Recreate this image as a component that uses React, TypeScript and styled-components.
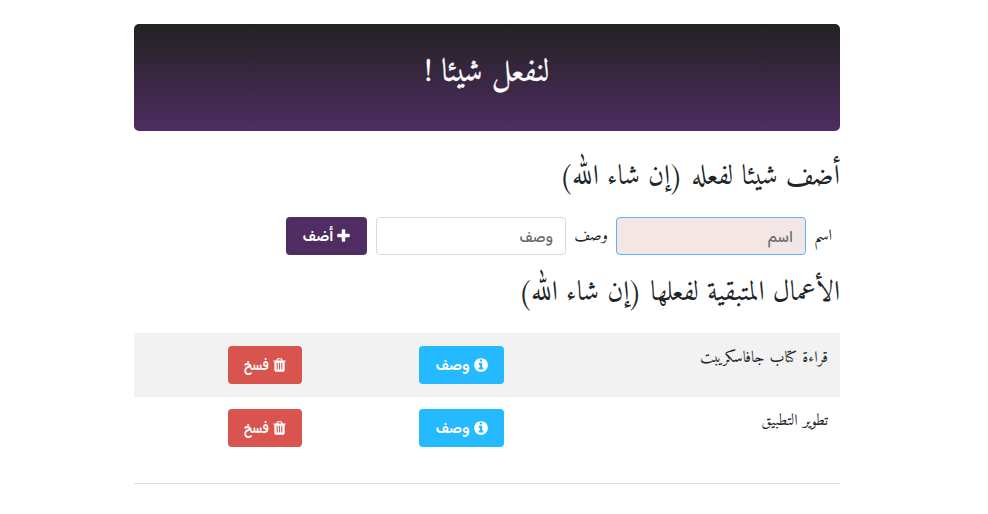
import React from "react";
import styled, { createGlobalStyle } from "styled-components";

const Global = createGlobalStyle`
  *, *::before, *::after { box-sizing: border-box; }
  body {
    margin: 0;
    background: #fff;
    color: #212529;
    font: 16px/24px Amiri, "Noto Naskh Arabic", "DejaVu Sans", serif;
  }
`;

const controlFont = `"Baloo Bhaijaan 2", "Noto Naskh Arabic", "DejaVu Sans", sans-serif`;

const Page = styled.main`
  width: 706px;
  margin-left: 134px;
  padding-top: 24px;
`;

const Banner = styled.header`
  height: 107px;
  padding-top: 28px;
  border-radius: 5px;
  background: linear-gradient(#222, #4f2c62);
  color: #fff;
  text-align: center;
`;

const BannerTitle = styled.h1`
  margin: 0;
  font-size: 32px;
  font-weight: 400;
  line-height: 42px;
  -webkit-text-stroke: 0.3px currentColor;
`;

const SectionTitle = styled.h2<{ $top: number; $bottom: number }>`
  margin: ${(p) => p.$top}px 0 ${(p) => p.$bottom}px;
  font-size: 28px;
  font-weight: 400;
  line-height: 34px;
`;

const Form = styled.form`
  display: flex;
  align-items: center;
  height: 38px;
  padding-right: 8px;
`;

const Label = styled.label<{ $width: number }>`
  width: ${(p) => p.$width}px;
  white-space: nowrap;
`;

const Input = styled.input<{ $active?: boolean }>`
  width: 190px;
  height: 38px;
  margin-left: ${(p) => (p.$active ? 8 : 9)}px;
  padding: 8px 12px 4px;
  border: 1px solid ${(p) => (p.$active ? "#5cb3fd" : "#d9d9d9")};
  border-radius: 4px;
  outline: 0;
  background: ${(p) => (p.$active ? "#f5e6e6" : "#fff")};
  font: 500 15.6px/24px ${controlFont};
  &::placeholder {
    color: #636c72;
    opacity: 1;
  }
`;

const Button = styled.button<{ $width: number; $color: string }>`
  display: flex;
  align-items: center;
  justify-content: center;
  gap: 4px;
  width: ${(p) => p.$width}px;
  height: 38px;
  padding: 4px 0 0;
  border: 0;
  border-radius: 4px;
  background: ${(p) => p.$color};
  color: #fff;
  font: 600 15.4px/24px ${controlFont};
  white-space: nowrap;
`;

const Narrow = styled.span`
  display: block;
  width: 24px;
  transform: scaleX(0.86);
  transform-origin: right;
`;

const Icon = styled.svg`
  display: block;
  flex: none;
  height: 16px;
  margin-bottom: 4px;
  fill: currentColor;
`;

const Table = styled.div`
  border-bottom: 1px solid #e0e0e0;
  height: 151px;
`;

const Row = styled.div<{ $striped?: boolean }>`
  display: grid;
  grid-template-columns: 324px 202px 180px;
  height: 63px;
  padding-top: 12px;
  border-top: 1px solid #eceeef;
  background: ${(p) => (p.$striped ? "#f2f2f2" : "#fff")};
`;

const Task = styled.div`
  padding-right: 12px;
  font-kerning: none;
  word-spacing: 0.5px;
`;

const Cell = styled.div`
  padding-right: 12px;
`;

const PlusIcon = () => (
  <Icon width="13" viewBox="192 0 1408 1792" aria-hidden>
    <path d="M1600 736v192q0 40-28 68t-68 28h-416v416q0 40-28 68t-68 28h-192q-40 0-68-28t-28-68v-416h-416q-40 0-68-28t-28-68v-192q0-40 28-68t68-28h416v-416q0-40 28-68t68-28h192q40 0 68 28t28 68v416h416q40 0 68 28t28 68z" />
  </Icon>
);

const InfoIcon = () => (
  <Icon width="14" viewBox="128 0 1536 1792" aria-hidden>
    <path d="M1152 1376v-160q0-14-9-23t-23-9h-96v-512q0-14-9-23t-23-9h-320q-14 0-23 9t-9 23v160q0 14 9 23t23 9h96v320h-96q-14 0-23 9t-9 23v160q0 14 9 23t23 9h448q14 0 23-9t9-23zm-128-896v-160q0-14-9-23t-23-9h-192q-14 0-23 9t-9 23v160q0 14 9 23t23 9h192q14 0 23-9t9-23zm640 416q0 209-103 385.5t-279.5 279.5-385.5 103-385.5-103-279.5-279.5-103-385.5 103-385.5 279.5-279.5 385.5-103 385.5 103 279.5 279.5 103 385.5z" />
  </Icon>
);

const TrashIcon = () => (
  <Icon width="13" viewBox="192 0 1408 1792" aria-hidden>
    <path d="M704 1376v-704q0-14-9-23t-23-9h-64q-14 0-23 9t-9 23v704q0 14 9 23t23 9h64q14 0 23-9t9-23zm256 0v-704q0-14-9-23t-23-9h-64q-14 0-23 9t-9 23v704q0 14 9 23t23 9h64q14 0 23-9t9-23zm256 0v-704q0-14-9-23t-23-9h-64q-14 0-23 9t-9 23v704q0 14 9 23t23 9h64q14 0 23-9t9-23zm-544-992h448l-48-117q-7-9-17-11h-317q-10 2-17 11zm928 32v64q0 14-9 23t-23 9h-96v948q0 83-47 143.5t-113 60.5h-832q-66 0-113-58.5t-47-141.5v-952h-96q-14 0-23-9t-9-23v-64q0-14 9-23t23-9h309l70-167q15-37 54-63t79-26h320q40 0 79 26t54 63l70 167h309q14 0 23 9t9 23z" />
  </Icon>
);

const tasks = ["قراءة كتاب جافاسكريبت", "تطوير التطبيق"];

export default function App() {
  return (
    <Page dir="rtl" lang="ar">
      <Global />
      <Banner>
        <BannerTitle>لنفعل شيئا !</BannerTitle>
      </Banner>
      <SectionTitle $top={30} $bottom={22}>أضف شيئا لفعله (إن شاء الله)</SectionTitle>
      <Form>
        <Label htmlFor="name" $width={26}>اسم</Label>
        <Input id="name" placeholder="اسم" $active />
        <Label htmlFor="about" $width={42}>وصف</Label>
        <Input id="about" placeholder="وصف" />
        <Button type="button" $width={81} $color="#4f2c62"><PlusIcon />أضف</Button>
      </Form>
      <SectionTitle $top={22} $bottom={22}>الأعمال المتبقية لفعلها (إن شاء الله)</SectionTitle>
      <Table>
        {tasks.map((task, i) => (
          <Row key={task} $striped={i === 0}>
            <Task>{task}</Task>
            <Cell><Button $width={85} $color="#25b9ff"><InfoIcon />وصف</Button></Cell>
            <Cell><Button $width={74} $color="#d9534f"><TrashIcon /><Narrow>فسخ</Narrow></Button></Cell>
          </Row>
        ))}
      </Table>
    </Page>
  );
}
